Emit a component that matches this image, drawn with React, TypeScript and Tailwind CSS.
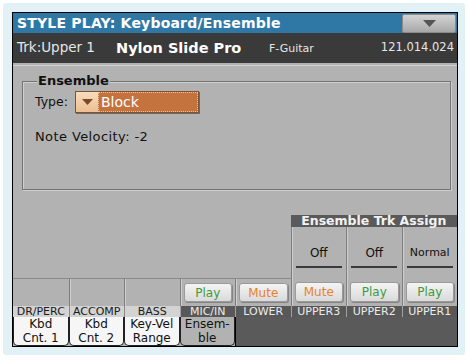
import React from 'react';

type Ch = { name: string; dark: boolean; btn: 'Play' | 'Mute' | null };

const channels: Ch[] = [
  { name: 'DR/PERC', dark: false, btn: null },
  { name: 'ACCOMP', dark: false, btn: null },
  { name: 'BASS', dark: false, btn: null },
  { name: 'MIC/IN', dark: true, btn: 'Play' },
  { name: 'LOWER', dark: true, btn: 'Mute' },
  { name: 'UPPER3', dark: true, btn: 'Mute' },
  { name: 'UPPER2', dark: true, btn: 'Play' },
  { name: 'UPPER1', dark: true, btn: 'Play' },
];

const assign = ['Off', 'Off', 'Normal'];

const tabs = [
  ['Kbd', 'Cnt. 1'],
  ['Kbd', 'Cnt. 2'],
  ['Key-Vel', 'Range'],
  ['Ensem-', 'ble'],
];

function MixButton({ label }: { label: 'Play' | 'Mute' }) {
  return (
    <div
      className={`flex h-full w-full items-center justify-center rounded-[3px] border border-[#9a9a9a] bg-gradient-to-b from-[#f4f4f4] to-[#dadada] text-[12px] leading-none shadow-[1px_1px_0_#858585] ${
        label === 'Play' ? 'text-[#3e9a3e]' : 'text-[#e8812e]'
      }`}
    >
      {label}
    </div>
  );
}

export default function App() {
  return (
    <div className="h-[360px] w-[468px] bg-white p-[3px] pb-[5px] font-['DejaVu_Sans',sans-serif]">
      <div className="h-full rounded-[3px] bg-[#e2f1f5] pb-[8px] pl-[9px] pr-[7px] pt-[9px]">
        <div className="flex h-full flex-col border border-black bg-[#b2b2b2]">
          {/* title bar */}
          <div className="flex h-[20px] items-center justify-between bg-[#2f78a6] pl-[4px] pr-[1px]">
            <span className="text-[14px] font-bold leading-none tracking-[0.2px] text-white">STYLE PLAY: Keyboard/Ensemble</span>
            <div className="flex h-[19px] w-[54px] items-center justify-center rounded-[2px] border border-[#8a8a8a] bg-gradient-to-b from-[#d4d4d4] to-[#a8a8a8]">
              <svg width="13" height="7" viewBox="0 0 13 7">
                <path d="M0 0 H13 L6.5 7 Z" fill="#555" />
              </svg>
            </div>
          </div>

          {/* track info */}
          <div className="flex h-[30px] items-center bg-[#3a3a3a] pl-[4px] pr-[3px] text-[#e6e6e6]">
            <span className="w-[99px] text-[13.5px] leading-none">Trk:Upper 1</span>
            <span className="w-[153px] text-[14.5px] font-bold leading-none text-white">Nylon Slide Pro</span>
            <span className="flex-1 text-[11px] leading-none">F-Guitar</span>
            <span className="text-[11.5px] leading-none">121.014.024</span>
          </div>

          {/* page */}
          <div className="flex flex-1 flex-col">
            <div className="mt-[2px] h-[16px] border-t border-[#d2d2d2]" />

            <div className="relative ml-[9px] mr-[6px] h-[109px] border border-[#747474] shadow-[inset_1px_1px_0_#cfcfcf,1px_1px_0_#cfcfcf]">
              <span className="absolute -top-[9px] left-[14px] bg-[#b2b2b2] px-[1px] text-[13px] font-bold leading-[16px] text-[#111]">
                Ensemble
              </span>
              <div className="ml-[12px] mt-[9px] flex items-center">
                <span className="w-[40px] text-[12.5px] leading-none text-[#111]">Type:</span>
                <div className="flex h-[22px] w-[124px] border border-[#7a5434] shadow-[1px_1px_0_#6a6a6a]">
                  <div className="flex w-[22px] items-center justify-center bg-gradient-to-b from-[#f8dcbc] to-[#eebf92]">
                    <svg width="11" height="6" viewBox="0 0 11 6">
                      <path d="M0 0 H11 L5.5 6 Z" fill="#7b4a2c" />
                    </svg>
                  </div>
                  <div className="flex flex-1 items-center border border-dotted border-[#ecc49c] bg-[#c4733f] pl-[2px] text-[14px] leading-none text-white">
                    Block
                  </div>
                </div>
              </div>
              <div className="ml-[12px] mt-[16px] text-[13px] leading-[16px] tracking-[0.4px] text-[#111]">
                Note Velocity: -2
              </div>
            </div>

            <div className="h-[25px]" />

            {/* mixer: assign block */}
            <div className="grid h-[63px] grid-cols-8">
              <div className="col-span-5" />
              <div className="col-span-3 flex flex-col">
                <div className="flex h-[12px] items-center justify-center bg-[#5a5a5a] text-[12.5px] font-bold leading-none text-[#f2f2f2]">
                  Ensemble Trk Assign
                </div>
                <div className="grid flex-1 grid-cols-3">
                  {assign.map((v, i) => (
                    <div
                      key={i}
                      className="flex flex-col items-center border-l border-[#7e7e7e] pt-[20px] shadow-[inset_1px_0_0_#cdcdcd]"
                    >
                      <span className={`leading-[12px] text-[#111] ${v === 'Normal' ? 'text-[11px]' : 'text-[12px]'}`}>{v}</span>
                      <div className="mt-[7px] h-[2px] w-[46px] bg-[#3a3a3a]" />
                    </div>
                  ))}
                </div>
              </div>
            </div>

            {/* mixer: mute / play */}
            <div className="grid h-[28px] grid-cols-8">
              {channels.map((c, i) => (
                <div
                  key={c.name}
                  className={`px-[3px] py-[4px] ${i > 0 ? 'border-l border-[#7e7e7e] shadow-[inset_1px_0_0_#cdcdcd]' : ''} ${
                    i < 5 ? 'border-t border-t-[#8a8a8a]' : ''
                  }`}
                >
                  {c.btn && <MixButton label={c.btn} />}
                </div>
              ))}
            </div>

            {/* mixer: channel names */}
            <div className="grid h-[11px] grid-cols-8">
              {channels.map((c, i) => (
                <div
                  key={c.name}
                  className={`flex items-center justify-center text-[11px] leading-none ${
                    c.dark ? 'bg-[#585858] text-[#ececec]' : 'bg-[#d3d3d3] text-[#1a1a1a]'
                  } ${i > 0 ? (c.dark ? 'border-l border-[#a2a2a2]' : 'border-l border-[#8a8a8a]') : ''}`}
                >
                  {c.name}
                </div>
              ))}
            </div>

            {/* tabs */}
            <div className="grid h-[29px] grid-cols-8">
              {tabs.map((t, i) => (
                <div
                  key={i}
                  className={`flex flex-col items-center justify-center rounded-b-[5px] border-x border-b border-[#222] text-[12px] leading-[14px] text-[#111] ${
                    i === 3 ? 'bg-[#b2b2b2]' : 'bg-[#f6f6f6]'
                  }`}
                >
                  <span>{t[0]}</span>
                  <span>{t[1]}</span>
                </div>
              ))}
              <div className="col-span-4 border-l border-black bg-[#5a5a5a]" />
            </div>
          </div>
        </div>
      </div>
    </div>
  );
}
